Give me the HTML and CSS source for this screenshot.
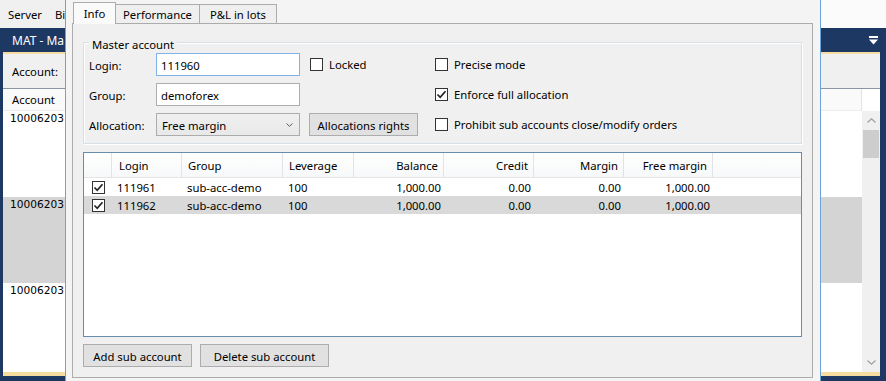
FILE: index.html
```html
<!DOCTYPE html>
<html>
<head>
<meta charset="utf-8">
<link rel="stylesheet" href="styles.css">
</head>
<body>
<div class="app">
  <div class="menubar"><span>Server</span><span>Bi</span></div>
  <div class="mdi">
    <div class="titlebar">
      <span>MAT - Ma</span>
      <svg class="filter" width="9" height="9" viewBox="0 0 9 9"><rect x="0" y="0" width="9" height="2" fill="#fff"/><polygon points="0,3.5 9,3.5 4.5,8.5" fill="#fff"/></svg>
    </div>
    <div class="accent"></div>
    <div class="toolbar">Account:</div>
    <div class="list">
      <div class="list-head"><div class="lh-cell">Account</div></div>
      <div class="list-body">
        <div class="rows">
          <div class="row">10006203</div>
          <div class="row sel">10006203</div>
          <div class="row">10006203</div>
        </div>
        <div class="vscroll">
          <div class="arrow"><svg width="9" height="5" viewBox="0 0 9 5"><polyline points="0.5,4.5 4.5,0.8 8.5,4.5" fill="none" stroke="#a0a0a0" stroke-width="1.2"/></svg></div>
          <div class="thumb"></div>
          <div class="track"></div>
          <div class="arrow"><svg width="9" height="5" viewBox="0 0 9 5"><polyline points="0.5,0.5 4.5,4.2 8.5,0.5" fill="none" stroke="#a0a0a0" stroke-width="1.2"/></svg></div>
        </div>
      </div>
    </div>
    <div class="accent bottom"></div>
  </div>
</div>

<div class="dialog">
  <div class="tabs">
    <div class="tab active w-info">Info</div>
    <div class="tab w-perf">Performance</div>
    <div class="tab w-pl">P&amp;L in lots</div>
  </div>
  <div class="panel">
    <fieldset class="group">
      <legend>Master account</legend>
      <div class="form">
        <div class="lbl">Login:</div>
        <div class="input focus">111960</div>
        <label class="chk c3"><span class="box"></span>Locked</label>
        <label class="chk"><span class="box"></span>Precise mode</label>

        <div class="lbl">Group:</div>
        <div class="input">demoforex</div>
        <div></div>
        <label class="chk"><span class="box"><svg width="11" height="11" viewBox="0 0 11 11"><polyline points="1.5,5.5 4.2,8.3 9.5,2.2" fill="none" stroke="#222" stroke-width="1.7"/></svg></span>Enforce full allocation</label>

        <div class="lbl">Allocation:</div>
        <div class="combo">Free margin<svg width="7" height="4" viewBox="0 0 7 4"><polyline points="0.5,0.5 3.5,3.3 6.5,0.5" fill="none" stroke="#606060" stroke-width="1"/></svg></div>
        <div class="btn c3b w-alloc">Allocations rights</div>
        <label class="chk"><span class="box"></span>Prohibit sub accounts close/modify orders</label>
      </div>
    </fieldset>

    <div class="grid">
      <div class="g-row g-head">
        <div class="gc"></div>
        <div class="gc">Login</div>
        <div class="gc">Group</div>
        <div class="gc">Leverage</div>
        <div class="gc r">Balance</div>
        <div class="gc r">Credit</div>
        <div class="gc r">Margin</div>
        <div class="gc r">Free margin</div>
        <div class="gc last"></div>
      </div>
      <div class="g-row g-data">
        <div class="gc ck"><span class="box sm"><svg width="11" height="11" viewBox="0 0 11 11"><polyline points="1.5,5.5 4.2,8.3 9.5,2.2" fill="none" stroke="#222" stroke-width="1.7"/></svg></span></div>
        <div class="gc">111961</div>
        <div class="gc">sub-acc-demo</div>
        <div class="gc">100</div>
        <div class="gc r">1,000.00</div>
        <div class="gc r">0.00</div>
        <div class="gc r">0.00</div>
        <div class="gc r">1,000.00</div>
        <div class="gc"></div>
      </div>
      <div class="g-row g-data sel">
        <div class="gc ck"><span class="box sm"><svg width="11" height="11" viewBox="0 0 11 11"><polyline points="1.5,5.5 4.2,8.3 9.5,2.2" fill="none" stroke="#222" stroke-width="1.7"/></svg></span></div>
        <div class="gc">111962</div>
        <div class="gc">sub-acc-demo</div>
        <div class="gc">100</div>
        <div class="gc r">1,000.00</div>
        <div class="gc r">0.00</div>
        <div class="gc r">0.00</div>
        <div class="gc r">1,000.00</div>
        <div class="gc"></div>
      </div>
    </div>

    <div class="actions">
      <div class="btn w-add">Add sub account</div>
      <div class="btn w-del">Delete sub account</div>
    </div>
  </div>
</div>
</body>
</html>
```
FILE: styles.css
```css
* { box-sizing: border-box; }
body {
  margin: 0;
  width: 886px;
  height: 381px;
  overflow: hidden;
  position: relative;
  font-family: "Noto Sans", "Open Sans", sans-serif;
  font-size: 11.3px;
  color: #000;
  background: #f0f0f0;
}

/* background application */
.app { height: 381px; display: flex; flex-direction: column; }
.menubar {
  height: 28px; flex: none;
  display: flex; align-items: center; gap: 13px;
  padding-left: 8px;
  background: linear-gradient(to right, #f0f0f0 820px, #fbfbfb 820px);
}
.mdi {
  flex: 1; min-height: 0;
  display: flex; flex-direction: column;
  border-left: 3px solid #1e3864;
  border-right: 6px solid #1e3864;
  border-bottom: 5px solid #1e3864;
}
.titlebar {
  height: 24px; flex: none;
  background: #1e3864; color: #fff;
  display: flex; align-items: center; justify-content: space-between;
  padding: 0 2px 0 9px;
  font-size: 12px;
}
.accent { height: 2px; flex: none; background: #f7dca0; }
.accent.bottom { height: 4px; }
.toolbar {
  height: 34px; flex: none;
  display: flex; align-items: center;
  padding-left: 9px;
  background: #f0f0f0;
}
.list {
  flex: 1; min-height: 0;
  background: #fff;
  border-top: 1px solid #8a96a3;
  display: flex; flex-direction: column;
}
.list-head { height: 22px; flex: none; display: flex; }
.lh-cell {
  width: 859px;
  display: flex; align-items: center;
  padding-left: 9px;
  background: #fafafa;
  border-right: 1px solid #e3e3e3;
  border-bottom: 1px solid #ececec;
}
.list-body { flex: 1; min-height: 0; display: flex; }
.rows { flex: 1; overflow: hidden; }
.row {
  height: 86px; padding-left: 7px; line-height: 15px;
  font-family: "DejaVu Sans", sans-serif; font-size: 10.6px;
  white-space: nowrap;
}
.row.sel { background: #d4d4d4; }
.vscroll {
  width: 18px; flex: none;
  background: #f0f0f0;
  display: flex; flex-direction: column;
}
.arrow { height: 19px; display: flex; align-items: center; justify-content: center; }
.thumb { height: 28px; background: #cdcdcd; margin: 0 1px; }
.track { flex: 1; }

/* dialog window */
.dialog {
  position: absolute;
  left: 65px; top: 0;
  width: 756px; height: 400px;
  background: #f4f4f4;
  border-left: 1px solid #6aa5da;
  border-right: 1px solid #6aa5da;
  padding: 2px 7px 0 6px;
}
.tabs { height: 21px; display: flex; align-items: flex-end; padding-left: 1px; }
.tab {
  height: 19px;
  display: flex; align-items: center; justify-content: center;
  border: 1px solid #acacac; border-bottom: none;
  background: #efefef;
  margin-left: -1px;
}
.tab:first-child { margin-left: 0; }
.tab.active {
  height: 22px; margin-bottom: -1px;
  position: relative; z-index: 1;
  background: #fafafa;
  padding-bottom: 1px;
}
.w-info { width: 43px; }
.w-perf { width: 85px; }
.w-pl { width: 78px; }

.panel {
  height: 355px;
  border: 1px solid #acacac;
  background: #f0f0f0;
  padding: 7px 10px 8px 10px;
}
.group {
  margin: 0; min-width: 0;
  border: 1px solid #d5dfe5;
  box-shadow: inset 1px 1px 0 #fff, 1px 1px 0 #fff;
  padding: 0 0 7px 5px;
}
.group legend {
  padding: 6px 3px 0 3px;
  height: 22px;
  line-height: 16px;
  background: #f0f0f0;
}
.form {
  display: grid;
  grid-template-columns: 67px 144px 135px 1fr;
  grid-auto-rows: 23px;
  row-gap: 7px;
  padding-top: 0;
}
.lbl { display: flex; align-items: center; padding-top: 1px; }
.input {
  border: 1px solid #abadb3; background: #fff;
  display: flex; align-items: center; padding: 1px 0 0 4px;
}
.input.focus { border-color: #7eb4ea; }
.combo {
  border: 1px solid #acacac;
  background: linear-gradient(#f0f0f0, #e8e8e8);
  display: flex; align-items: center; justify-content: space-between;
  padding: 1px 6px 0 5px;
}
.chk { display: flex; align-items: center; gap: 6px; }
.c3 { margin-left: 10px; }
.c3b { margin-left: 9px; }
.box {
  width: 13px; height: 13px; flex: none;
  border: 1px solid #333; background: #fff;
  display: flex; align-items: center; justify-content: center;
}
.btn {
  height: 23px;
  border: 1px solid #adadad; background: #e1e1e1;
  display: flex; align-items: center; justify-content: center;
  padding-top: 1px;
}
.w-alloc { width: 109px; }
.w-add { width: 109px; }
.w-del { width: 129px; }

.grid {
  margin-top: 8px;
  height: 185px;
  border: 1px solid #688caf;
  background: #fff;
}
.g-row {
  display: grid;
  grid-template-columns: 28px 70px 101px 71px 90px 90px 90px 89px 1fr;
}
.g-head {
  height: 25px;
  background: linear-gradient(#fff, #f7f8f9);
  border-bottom: 1px solid #e5e5e5;
}
.g-head .gc { border-right: 1px solid #e2e3ea; padding-left: 6px; }
.g-head .gc:nth-child(2) { padding-left: 7px; }
.g-head .gc.r { padding-right: 5px; }
.g-head .gc.last { border-right: none; }
.gc { display: flex; align-items: center; padding-left: 5px; white-space: nowrap; overflow: hidden; }
.gc.r { justify-content: flex-end; padding-left: 0; padding-right: 3px; }
.g-data { height: 18px; }
.g-data.sel { background: #d9d9d9; }
.gc.ck { padding-left: 8px; }

.actions { display: flex; gap: 8px; margin-top: 7px; }
```
